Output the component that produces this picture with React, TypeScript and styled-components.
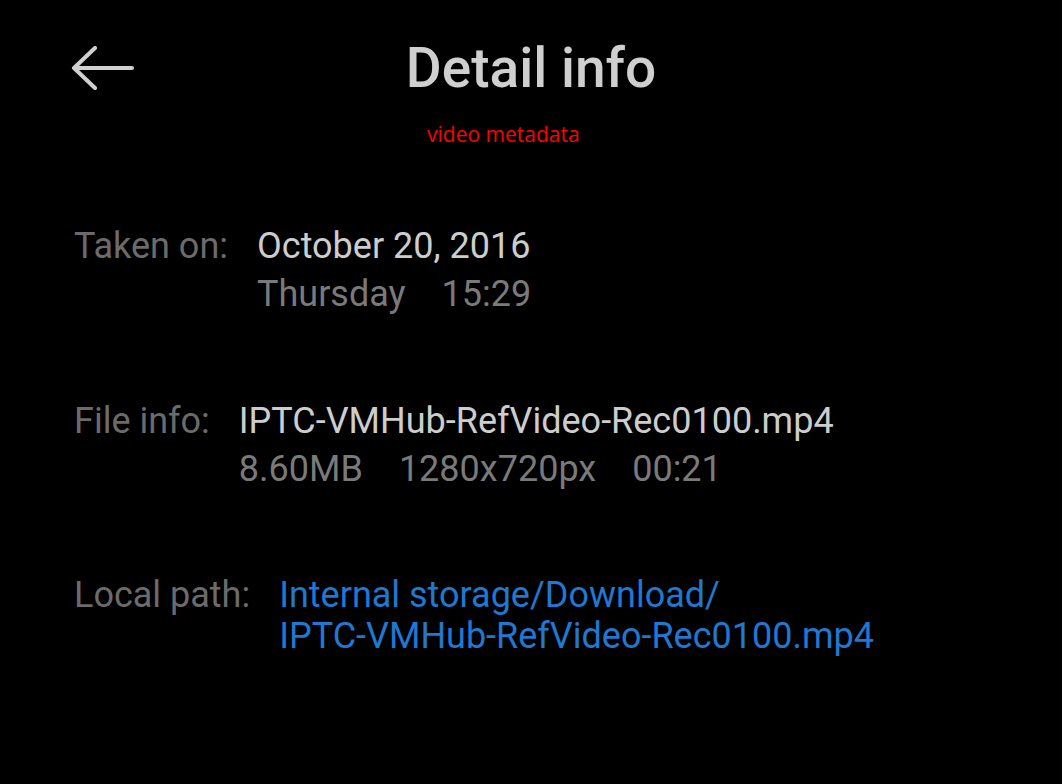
import styled, { createGlobalStyle } from 'styled-components'

const GlobalStyle = createGlobalStyle`
	html, body {
		margin: 0;
		padding: 0;
		background: #000;
	}
	body {
		font-family: Roboto, 'Noto Sans', sans-serif;
	}
`

const PageStyled = styled.div`
	width: 1062px;
	height: 784px;
	background: #000;
	overflow: hidden;
	display: flex;
	flex-direction: column;
`

const HeaderStyled = styled.header`
	display: grid;
	grid-template-columns: 1fr auto 1fr;
	align-items: center;
	padding-top: 36px;
	height: 64px;
`

const BackButtonStyled = styled.button`
	justify-self: start;
	margin-left: 70px;
	background: none;
	border: none;
	padding: 0;
	cursor: pointer;
	display: flex;
	align-items: center;
`

const TitleStyled = styled.h1`
	margin: 0;
	font-family: Roboto, sans-serif;
	font-size: 55px;
	font-weight: 500;
	line-height: 64px;
	color: #cfcfcf;
`

const SubtitleStyled = styled.div`
	padding-left: 427px;
	margin-top: 20px;
	font-family: 'Open Sans', sans-serif;
	font-size: 21px;
	line-height: 28px;
	color: #ff0000;
`

const ListStyled = styled.div`
	display: flex;
	flex-direction: column;
	padding-left: 74px;
	margin-top: 74px;
`

const RowStyled = styled.div<{ $lh: number; $gap: number }>`
	display: flex;
	gap: 29px;
	margin-top: ${({ $gap }): string => `${$gap}px`};
	font-size: 36px;
	line-height: ${({ $lh }): string => `${$lh}px`};
`

const LabelStyled = styled.div`
	color: #6b6b6b;
	white-space: nowrap;
`

const ValueStyled = styled.div`
	display: flex;
	flex-direction: column;
`

const LineStyled = styled.div<{ $tone: 'main' | 'sub' | 'link' }>`
	white-space: nowrap;
	display: flex;
	gap: 36px;
	color: ${({ $tone }): string =>
		$tone === 'main' ? '#cdcdcd' : $tone === 'sub' ? '#7a7a7a' : '#1f78d1'};
`

const BackArrow = (): JSX.Element => (
	<svg width="64" height="44" viewBox="0 0 64 44" fill="none">
		<path
			d="M4 22 H62 M25 2 L4 22 L25 42"
			stroke="#d0d0d0"
			strokeWidth="4"
			strokeLinecap="round"
			strokeLinejoin="round"
		/>
	</svg>
)

export default function App(): JSX.Element {
	return (
		<>
			<GlobalStyle />
			<PageStyled>
				<HeaderStyled>
					<BackButtonStyled type="button" aria-label="Back">
						<BackArrow />
					</BackButtonStyled>
					<TitleStyled>Detail info</TitleStyled>
					<div />
				</HeaderStyled>
				<SubtitleStyled>video metadata</SubtitleStyled>
				<ListStyled>
					<RowStyled $lh={48} $gap={0}>
						<LabelStyled>Taken on:</LabelStyled>
						<ValueStyled>
							<LineStyled $tone="main">October 20, 2016</LineStyled>
							<LineStyled $tone="sub">
								<span>Thursday</span>
								<span>15:29</span>
							</LineStyled>
						</ValueStyled>
					</RowStyled>
					<RowStyled $lh={48} $gap={79}>
						<LabelStyled>File info:</LabelStyled>
						<ValueStyled>
							<LineStyled $tone="main">IPTC-VMHub-RefVideo-Rec0100.mp4</LineStyled>
							<LineStyled $tone="sub">
								<span>8.60MB</span>
								<span>1280x720px</span>
								<span>00:21</span>
							</LineStyled>
						</ValueStyled>
					</RowStyled>
					<RowStyled $lh={41} $gap={82}>
						<LabelStyled>Local path:</LabelStyled>
						<ValueStyled>
							<LineStyled $tone="link">Internal storage/Download/</LineStyled>
							<LineStyled $tone="link">IPTC-VMHub-RefVideo-Rec0100.mp4</LineStyled>
						</ValueStyled>
					</RowStyled>
				</ListStyled>
			</PageStyled>
		</>
	)
}
